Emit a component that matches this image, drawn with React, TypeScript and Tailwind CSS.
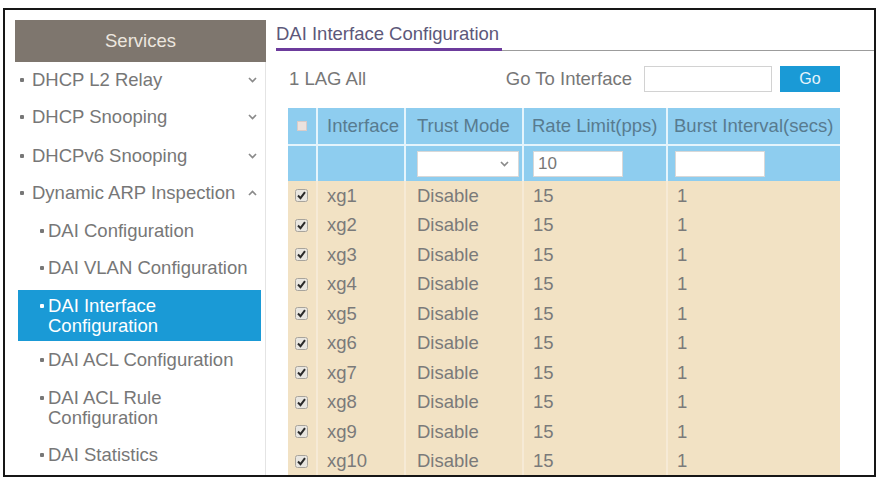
import React from "react";

const FONT = '"Liberation Sans", Arial, Helvetica, sans-serif';

function Chevron({ up }: { up?: boolean }) {
  return (
    <svg width="9" height="6" viewBox="0 0 9 6" className="shrink-0">
      <polyline
        points={up ? "1,5 4.5,1.5 8,5" : "1,1 4.5,4.5 8,1"}
        fill="none"
        stroke="#8a8a8a"
        strokeWidth="1.7"
      />
    </svg>
  );
}

function Dot({ className = "" }: { className?: string }) {
  return <span className={`inline-block w-[4px] h-[4px] rounded-[1px] bg-current shrink-0 ${className}`} />;
}

function TopItem({ label, h, up }: { label: string; h: string; up?: boolean }) {
  return (
    <div className={`${h} flex items-center justify-between pl-[5px] pr-[8px] text-[#777777]`}>
      <div className="flex items-center">
        <Dot className="mr-[8px]" />
        <span>{label}</span>
      </div>
      <Chevron up={up} />
    </div>
  );
}

function Lines({ lines, gap }: { lines: string[]; gap: string }) {
  return (
    <div className="flex items-start">
      <span className={`h-[20px] flex items-center ${gap}`}>
        <Dot />
      </span>
      <div className="leading-[20px]">
        {lines.map((l) => (
          <div key={l}>{l}</div>
        ))}
      </div>
    </div>
  );
}

function SubItem({ lines, h }: { lines: string[]; h: string }) {
  return (
    <div className={`${h} flex items-center pl-[25px] text-[#777777]`}>
      <Lines lines={lines} gap="mr-[4px]" />
    </div>
  );
}

function Check() {
  return (
    <svg width="13" height="13" viewBox="0 0 13 13">
      <rect x="0.5" y="0.5" width="12" height="12" rx="2" fill="#e9e6e0" stroke="#a8a49c" />
      <polyline points="3,6.5 5.5,9.2 10,3.2" fill="none" stroke="#2a2a2a" strokeWidth="2" />
    </svg>
  );
}

const rows = ["xg1", "xg2", "xg3", "xg4", "xg5", "xg6", "xg7", "xg8", "xg9", "xg10"];

export default function App() {
  return (
    <div
      className="w-[878px] h-[478px] bg-white pt-[8px] pl-[3px] pr-[2px] pb-[1px]"
      style={{ fontFamily: FONT }}
    >
      <div className="w-full h-full border-2 border-[#161616] overflow-hidden flex bg-white text-[18.5px]">
        {/* Sidebar */}
        <div className="ml-[10px] mt-[10px] w-[251px] shrink-0 flex flex-col">
          <div className="h-[42px] bg-[#7e766e] text-[#ece6df] flex items-center justify-center">
            Services
          </div>
          <div className="flex-1 bg-white border-r border-[#e4e4e4] leading-[22px]">
            <TopItem label="DHCP L2 Relay" h="h-[35px]" />
            <TopItem label="DHCP Snooping" h="h-[40px]" />
            <TopItem label="DHCPv6 Snooping" h="h-[37.5px]" />
            <TopItem label="Dynamic ARP Inspection" h="h-[37.5px]" up />
            <SubItem lines={["DAI Configuration"]} h="h-[37.5px]" />
            <SubItem lines={["DAI VLAN Configuration"]} h="h-[37.5px]" />
            <div className="mt-[3px] ml-[3px] mr-[4px] h-[51px] bg-[#1a9ad6] text-white flex items-center pl-[22px]">
              <Lines lines={["DAI Interface", "Configuration"]} gap="mr-[4px]" />
            </div>
            <SubItem lines={["DAI ACL Configuration"]} h="h-[38px]" />
            <SubItem lines={["DAI ACL Rule", "Configuration"]} h="h-[57px]" />
            <SubItem lines={["DAI Statistics"]} h="h-[38px]" />
          </div>
        </div>

        {/* Main */}
        <div className="ml-[10px] flex-1 flex flex-col">
          <div className="mt-[13px] flex border-b border-[#9c9c9c]">
            <div className="mb-[-1px] pb-[3px] pr-[3px] border-b-[3px] border-[#6c3b9c] leading-[22px] text-[#5d587a]">
              DAI Interface Configuration
            </div>
          </div>

          <div className="ml-[12px] w-[552px]">
            <div className="mt-[15px] h-[26px] flex items-center justify-between text-[#777777]">
              <span className="ml-[1px]">1 LAG All</span>
              <div className="flex items-center h-full">
                <span className="mr-[12px]">Go To Interface</span>
                <div className="w-[128px] h-full border border-[#d2d2d2] bg-white" />
                <button className="ml-[8px] w-[60px] h-full bg-[#1a9ad6] text-[#e6f4fb] text-[16px]">
                  Go
                </button>
              </div>
            </div>

            {/* Table */}
            <div className="mt-[16px]">
              <div className="grid grid-cols-[28px_86px_116px_142px_172px] gap-x-[2px] bg-[#e4f4fc] text-[#587b8f]">
                <div className="h-[36px] bg-[#8ecdef] flex items-center justify-center">
                  <span className="w-[10px] h-[10px] bg-[#ece2de] border border-[#d9cbc8]" />
                </div>
                <div className="bg-[#8ecdef] flex items-center pl-[9px]">Interface</div>
                <div className="bg-[#8ecdef] flex items-center pl-[11px]">Trust Mode</div>
                <div className="bg-[#8ecdef] flex items-center pl-[8px] whitespace-nowrap">Rate Limit(pps)</div>
                <div className="bg-[#8ecdef] flex items-center pl-[6px] whitespace-nowrap">
                  Burst Interval(secs)
                </div>
              </div>
              <div className="h-[2px] bg-[#e4f4fc]" />
              <div className="grid grid-cols-[28px_86px_116px_142px_172px] gap-x-[2px] bg-[#e4f4fc]">
                <div className="h-[35px] bg-[#8ecdef]" />
                <div className="bg-[#8ecdef]" />
                <div className="bg-[#8ecdef] flex items-center pl-[11px] pr-[3px]">
                  <div className="w-full h-[26px] bg-white border border-[#d8d8d8] flex items-center justify-end pr-[9px]">
                    <Chevron />
                  </div>
                </div>
                <div className="bg-[#8ecdef] flex items-center pl-[9px]">
                  <div className="w-[90px] h-[26px] bg-white border border-[#d8d8d8] flex items-center pl-[4px] text-[#777777] text-[17px]">
                    10
                  </div>
                </div>
                <div className="bg-[#8ecdef] flex items-center pl-[7px]">
                  <div className="w-[90px] h-[26px] bg-white border border-[#d8d8d8]" />
                </div>
              </div>
              {rows.map((r) => (
                <div
                  key={r}
                  className="grid grid-cols-[28px_86px_116px_142px_172px] gap-x-[2px] bg-[#f6ead6] text-[#7a7a7a]"
                >
                  <div className="h-[29.5px] bg-[#f2e2c4] flex items-center pl-[7px]">
                    <Check />
                  </div>
                  <div className="bg-[#f2e2c4] flex items-center pl-[9px]">{r}</div>
                  <div className="bg-[#f2e2c4] flex items-center pl-[11px]">Disable</div>
                  <div className="bg-[#f2e2c4] flex items-center pl-[9px]">15</div>
                  <div className="bg-[#f2e2c4] flex items-center pl-[9px]">1</div>
                </div>
              ))}
            </div>
          </div>
        </div>
      </div>
    </div>
  );
}
